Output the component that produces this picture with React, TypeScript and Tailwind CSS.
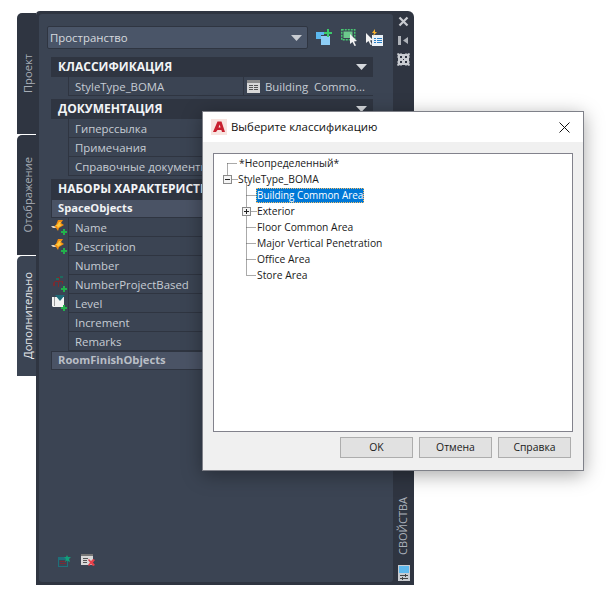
import React from "react";

function Caret({ color = "#d5d8dc" }: { color?: string }) {
  return (
    <svg width="11" height="6" viewBox="0 0 11 6" className="shrink-0">
      <path d="M0 0h11L5.500 6z" fill={color} />
    </svg>
  );
}

function Plus() {
  return <path d="M12 11h2v2h2v2h-2v2h-2v-2h-2v-2h2z" fill="#22b14c" />;
}

function Bolt() {
  return (
    <svg width="17" height="18" viewBox="0 0 17 18" className="block">
      <path d="M7 2h5l-2 3 3 2-5 3-1 3-2-3H1l4-3z" fill="#f08c12" />
      <path d="M8 4h2L9 6l2 1-3 2-1 1-1-2-2 0 3-2z" fill="#ffc93c" />
      <path d="M0 8l3 0 2 2H2z" fill="#d8d2c4" />
      <Plus />
    </svg>
  );
}

function Tree2() {
  return (
    <svg width="17" height="18" viewBox="0 0 17 18" className="block">
      <path d="M6 2h5v1H9v3h3v3h-1V7H8v5H7V7H4v4H2V8l2-2h4V3H6z" fill="#7a2a30" />
      <path d="M5 3h3v2H5zM9 1h3v2H9z" fill="#1f6b5e" />
      <Plus />
    </svg>
  );
}

function LevelIcon() {
  return (
    <svg width="17" height="18" viewBox="0 0 17 18" className="block">
      <path d="M1 3h12v10H2l-1-1z" fill="#f2f2f2" />
      <path d="M3 3h1v9H3z" fill="#9a9a9a" />
      <path d="M4 1h10L9 7z" fill="#1f6b78" />
      <Plus />
    </svg>
  );
}

function Row({
  label,
  icon,
  value,
}: {
  label: string;
  icon?: React.ReactNode;
  value?: React.ReactNode;
}) {
  return (
    <div className="flex h-[19px] items-stretch">
      <div className="relative w-[18px] shrink-0 border-r border-[#2f3541]">
        {icon && <div className="absolute left-0 top-0 z-10">{icon}</div>}
      </div>
      <div className="flex flex-1 border-b border-[#2f3541]">
        <div className="w-[174px] shrink-0 truncate pl-[6px] pt-[1px] text-[11.4px] leading-[18px] text-[#c6ccd4]">
          {label}
        </div>
        <div className="flex-1 border-l border-[#2f3541]">{value}</div>
      </div>
    </div>
  );
}

function Section({ title, mt }: { title: string; mt: string }) {
  return (
    <div className={`flex h-[20px] items-center justify-between bg-[#2f3541] pl-[7px] pr-[6px] ${mt}`}>
      <span className="text-[12px] font-bold text-[#f2f4f6]">{title}</span>
      <Caret />
    </div>
  );
}

function SubHeader({ title, dim }: { title: string; dim?: boolean }) {
  return (
    <div
      className={`flex h-[19px] items-center border-b border-l border-t border-[#2f3541] bg-[#4a5365] pl-[6px] text-[11.2px] font-bold ${
        dim ? "text-[#b9bec6]" : "text-[#f0f2f4]"
      }`}
    >
      {title}
    </div>
  );
}

function Tab({ label, active, h }: { label: string; active?: boolean; h: string }) {
  return (
    <div
      className={`flex items-center justify-center rounded-tl-[5px] pl-[4px] ${h} ${
        active ? "bg-[#3b4453] text-[#e8eaed]" : "bg-[#2f3541] text-[#a7adb6]"
      }`}
    >
      <span className="rotate-180 text-[11.2px] [writing-mode:vertical-rl]">{label}</span>
    </div>
  );
}

function TreeItem({ label, left, selected }: { label: string; left: string; selected?: boolean }) {
  return (
    <div className={`flex h-[16px] items-center ${left}`}>
      <span
        className={
          selected
            ? "flex h-[15px] items-center whitespace-nowrap border border-dotted border-[#f5c06a] bg-[#0078d7] text-[9.9px] text-white"
            : ""
        }
      >
        {label}
      </span>
    </div>
  );
}

function DialogButton({ label }: { label: string }) {
  return (
    <div className="flex h-[21px] w-[73px] items-center justify-center border border-[#adadad] bg-[#e1e1e1] text-[10.4px] text-[#1a1a1a]">
      {label}
    </div>
  );
}

export default function App() {
  return (
    <div className="relative h-[600px] w-[614px] overflow-hidden bg-white">
      <div className="flex pl-[17px] pt-[11px] font-['Open_Sans','Noto_Sans',sans-serif]">
        {/* left tabs */}
        <div className="flex w-[19px] flex-col gap-[1px] pt-[2px]">
          <Tab label="Проект" h="h-[121px]" />
          <Tab label="Отображение" h="h-[120px]" />
          <Tab label="Дополнительно" h="h-[120px]" active />
        </div>

        {/* palette */}
        <div className="flex h-[574px] w-[378px] rounded-tl-[4px] rounded-tr-[6px] bg-[#2f3541] pb-[3px] pl-[3px] pt-[3px]">
          <div className="flex h-full w-[354px] flex-col rounded-[3px] bg-[#3b4453] pl-[8px] pt-[12px]">
            <div className="flex items-center">
              <div className="flex h-[23px] w-[261px] items-center justify-between rounded-[2px] border border-[#2f3541] bg-[#4a5568] pl-[2px] pr-[5px] text-[11.4px] text-[#d6dadf]">
                <span>Пространство</span>
                <Caret color="#c8ccd2" />
              </div>
              <div className="ml-[8px] flex items-center gap-[7px]">
                <svg width="17" height="17" viewBox="0 0 17 17">
                  <path d="M0 3h8v3H5v4H0z" fill="#5bb8ee" />
                  <path d="M5 7h9v9H5z" fill="#8dcdf5" />
                  <path d="M11 0h2v3h3v2h-3v3h-2V5H8V3h3z" fill="#3ccb6c" />
                </svg>
                <svg width="17" height="17" viewBox="0 0 17 17" className="ml-[1px]">
                  <path d="M.750.750h13v10h-13z" fill="none" stroke="#47c872" strokeWidth="1.500" strokeDasharray="2 1" />
                  <path d="M2.500 2.500h9v6.500h-9z" fill="#6cc98c" />
                  <path d="M9 5l7 7-3 .5 2 4-1.500.5-2-4-2.500 2z" fill="#f2f2f2" />
                </svg>
                <svg width="17" height="17" viewBox="0 0 17 17" className="ml-[1px]">
                  <path d="M6 6h11v11H6z" fill="#eaf1f7" />
                  <path d="M8 9h2v1H8zM11 9h5v1h-5zM8 11h2v1H8zM11 11h5v1h-5zM8 13h2v1H8zM11 13h5v1h-5z" fill="#2a7fc4" />
                  <path d="M0 4l7 7-3 .5 2 4-1.500.5-2-4L0 14z" fill="#f2f2f2" />
                  <path d="M9 0 6 4h2L7 7l4-4H9z" fill="#f5b02e" />
                </svg>
              </div>
            </div>

            <div className="ml-[4px] w-[322px]">
              <Section title="КЛАССИФИКАЦИЯ" mt="mt-[8px]" />
              <Row
                label="StyleType_BOMA"
                value={
                  <div className="flex h-full items-center pl-[3px] pt-[1px] text-[11.4px] text-[#c6ccd4]">
                    <svg width="13" height="13" viewBox="0 0 13 13" className="mr-[5px] shrink-0">
                      <path d="M0 0h13v13H0z" fill="#d8d8d8" />
                      <path d="M0 0h13v3H0z" fill="#8c8c8c" />
                      <path d="M2 5h4v1H2zM7 5h4v1H7zM2 7h4v1H2zM7 7h4v1H7zM2 9h4v1H2zM7 9h4v1H7z" fill="#555" />
                    </svg>
                    <span className="whitespace-nowrap">Building&nbsp; Commo...</span>
                  </div>
                }
              />
              <Section title="ДОКУМЕНТАЦИЯ" mt="mt-[3px]" />
              <Row label="Гиперссылка" />
              <Row label="Примечания" />
              <Row label="Справочные документы" />
              <Section title="НАБОРЫ ХАРАКТЕРИСТИК" mt="mt-[3px]" />
              <SubHeader title="SpaceObjects" />
              <Row label="Name" icon={<Bolt />} />
              <Row label="Description" icon={<Bolt />} />
              <Row label="Number" />
              <Row label="NumberProjectBased" icon={<Tree2 />} />
              <Row label="Level" icon={<LevelIcon />} />
              <Row label="Increment" />
              <Row label="Remarks" />
              <SubHeader title="RoomFinishObjects" dim />
            </div>

            <div className="ml-[11px] mt-auto flex items-center gap-[10px] pb-[15px]">
              <svg width="13" height="12" viewBox="0 0 13 12">
                <path d="M0 2h10v10H0z" fill="#1f6f7a" />
                <path d="M1 5h8v6H1z" fill="#3b4453" />
                <path d="M2 6h6v1H2zM2 8h6v1H2z" fill="#7a2a35" />
                <path d="M9 0l1 2h3l-2 2 1 3-3-1.500L7 7l1-3-2-2h2z" fill="#12a07a" />
              </svg>
              <svg width="14" height="13" viewBox="0 0 14 13">
                <path d="M0 0h12v11H0z" fill="#d8d8d8" />
                <path d="M0 0h12v2H0z" fill="#777" />
                <path d="M2 4h5v1H2zM2 6h4v1H2zM2 8h4v1H2z" fill="#555" />
                <path d="M7 6l1-1 2 2 2-2 2 1-2 2.500 2 2.500-2 1-2-2-2 2-1-1 2-2.500z" fill="#e8404a" />
              </svg>
            </div>
          </div>

          {/* right rail */}
          <div className="flex flex-1 flex-col items-center pt-[2px]">
            <svg width="11" height="11" viewBox="0 0 11 11">
              <path d="M1.500 1.500l8 8M9.500 1.500l-8 8" stroke="#c9ccd1" strokeWidth="2.200" />
            </svg>
            <svg width="11" height="9" viewBox="0 0 11 9" className="mt-[9px]">
              <path d="M0 0h3v9H0zM10 1v7L5 4.500z" fill="#aeb2b8" />
            </svg>
            <svg width="13" height="13" viewBox="0 0 13 13" className="mt-[8px]">
              <path d="M0 1l1-1 2 1 1-1 1 1h3l1-1 1 1 2-1 1 1-1 2 1 1-1 1v3l1 1-1 1 1 2-1 1-2-1-1 1-1-1H5l-1 1-1-1-2 1-1-1 1-2-1-1 1-1V5L0 4l1-1z" fill="#c9ccd1" />
              <path d="M3 3h2v2H3zM8 3h2v2H8zM3 8h2v2H3zM8 8h2v2H8zM6 6h1v1H6z" fill="#2f3541" />
            </svg>
            <span className="mt-auto rotate-180 text-[11px] text-[#aab0b9] [writing-mode:vertical-rl]">
              СВОЙСТВА
            </span>
            <svg width="12" height="16" viewBox="0 0 12 16" className="mb-[1px] mt-[10px]">
              <path d="M0 0h12v16H0z" fill="#c9ccd1" />
              <path d="M1 1h10v7H1z" fill="#5fb8ec" />
              <path d="M2 10h8v1H2zM2 13h8v1H2zM7 9h1v3H7zM4 12h1v3H4z" fill="#444" />
            </svg>
          </div>
        </div>
      </div>

      {/* dialog */}
      <div className="absolute left-[202px] top-[111px] flex h-[360px] w-[382px] flex-col border border-[#7f8189] bg-[#f0f0f0] font-['Open_Sans','Noto_Sans',sans-serif] shadow-[0_4px_18px_rgba(0,0,0,0.35)]">
        <div className="flex h-[30px] shrink-0 items-center bg-white pl-[8px] pr-[13px]">
          <svg width="16" height="16" viewBox="0 0 16 16" className="shrink-0">
            <path d="M0 0h16v16H0z" fill="#f8e4e0" />
            <path d="M6.500 2.500h4L14 13h-3l-.6-2H6.500L5 13H2zM7.500 8.500h2L8.700 5.500z" fill="#c8202f" fillRule="evenodd" />
          </svg>
          <span className="ml-[4px] text-[11.4px] text-[#111]">Выберите классификацию</span>
          <svg width="11" height="11" viewBox="0 0 11 11" className="ml-auto">
            <path d="M.5.500l10 10M10.500.500l-10 10" stroke="#111" strokeWidth="1" />
          </svg>
        </div>

        <div className="relative ml-[10px] mt-[11px] h-[279px] w-[360px] border border-[#82828c] bg-white pt-[1px] text-[10.3px] leading-[16px] text-[#1a1a1a]">
          <svg width="60" height="140" viewBox="0 0 60 140" className="absolute left-0 top-0">
            <g stroke="#555" strokeDasharray="1 1" fill="none">
              <path d="M13.500 9.500v12M13.500 9.500h10M18.500 25.500h5M32.500 29.500v92M32.500 41.500h10M32.500 73.500h10M32.500 89.500h10M32.500 105.500h10M32.500 121.500h10M37.500 57.500h5" />
            </g>
            <rect x="9.500" y="21.500" width="8" height="8" fill="#f4f4f4" stroke="#8a8a8a" />
            <path d="M11 25.500h5" stroke="#222" />
            <rect x="28.500" y="53.500" width="8" height="8" fill="#f4f4f4" stroke="#8a8a8a" />
            <path d="M30 57.500h5M32.500 55v5" stroke="#222" />
          </svg>
          <TreeItem label="*Неопределенный*" left="pl-[25px]" />
          <TreeItem label="StyleType_BOMA" left="pl-[24px]" />
          <TreeItem label="Building Common Area" left="pl-[42px]" selected />
          <TreeItem label="Exterior" left="pl-[43px]" />
          <TreeItem label="Floor Common Area" left="pl-[43px]" />
          <TreeItem label="Major Vertical Penetration" left="pl-[43px]" />
          <TreeItem label="Office Area" left="pl-[43px]" />
          <TreeItem label="Store Area" left="pl-[43px]" />
        </div>

        <div className="ml-[137px] mt-[5px] flex gap-[6px]">
          <DialogButton label="OK" />
          <DialogButton label="Отмена" />
          <DialogButton label="Справка" />
        </div>
      </div>
    </div>
  );
}
